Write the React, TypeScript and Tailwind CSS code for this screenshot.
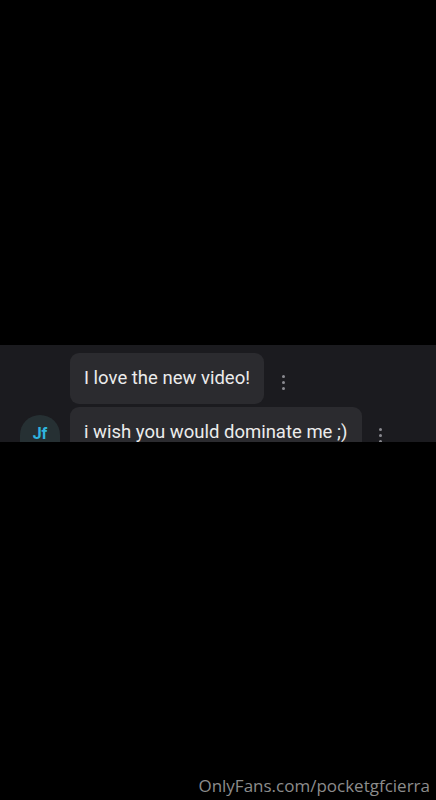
function Dots() {
  return (
    <div className="flex flex-col items-center gap-[3px]">
      <span className="h-[3px] w-[3px] rounded-full bg-[#8a8a90]" />
      <span className="h-[3px] w-[3px] rounded-full bg-[#8a8a90]" />
      <span className="h-[3px] w-[3px] rounded-full bg-[#8a8a90]" />
    </div>
  )
}

export default function App() {
  return (
    <div className="flex h-[800px] w-[436px] flex-col overflow-hidden bg-black font-['Roboto',sans-serif]">
      <div className="h-[345px] shrink-0" />

      <div className="flex h-[97px] shrink-0 flex-col gap-[3px] overflow-hidden bg-[#1b1b1f] pt-[8px]">
        <div className="flex items-center">
          <div className="w-[70px] shrink-0" />
          <div className="flex h-[51px] w-[194px] items-center rounded-[9px] bg-[#2b2b2f] px-[14px] text-[18.5px] text-[#ececec]">
            I love the new video!
          </div>
          <div className="ml-[18px] pt-[8px]">
            <Dots />
          </div>
        </div>

        <div className="flex items-start">
          <div className="flex w-[70px] shrink-0 justify-start pl-[20px] pt-[8px]">
            <div className="flex h-[38px] w-[40px] items-center justify-center rounded-t-full bg-[#263033] text-[16px] font-bold leading-[14px] text-[#2fb4de]">
              Jf
            </div>
          </div>
          <div className="flex h-[51px] w-[292px] items-center rounded-[9px] bg-[#2b2b2f] px-[14px] text-[18.5px] text-[#ececec]">
            i wish you would dominate me ;)
          </div>
          <div className="ml-[17px] pt-[21px]">
            <Dots />
          </div>
        </div>
      </div>

      <div className="flex flex-1 items-end justify-end pb-[2px] pr-[6px]">
        <span className="font-['Open_Sans',sans-serif] text-[17px] text-[#8c8c8c]">
          OnlyFans.com/pocketgfcierra
        </span>
      </div>
    </div>
  )
}
